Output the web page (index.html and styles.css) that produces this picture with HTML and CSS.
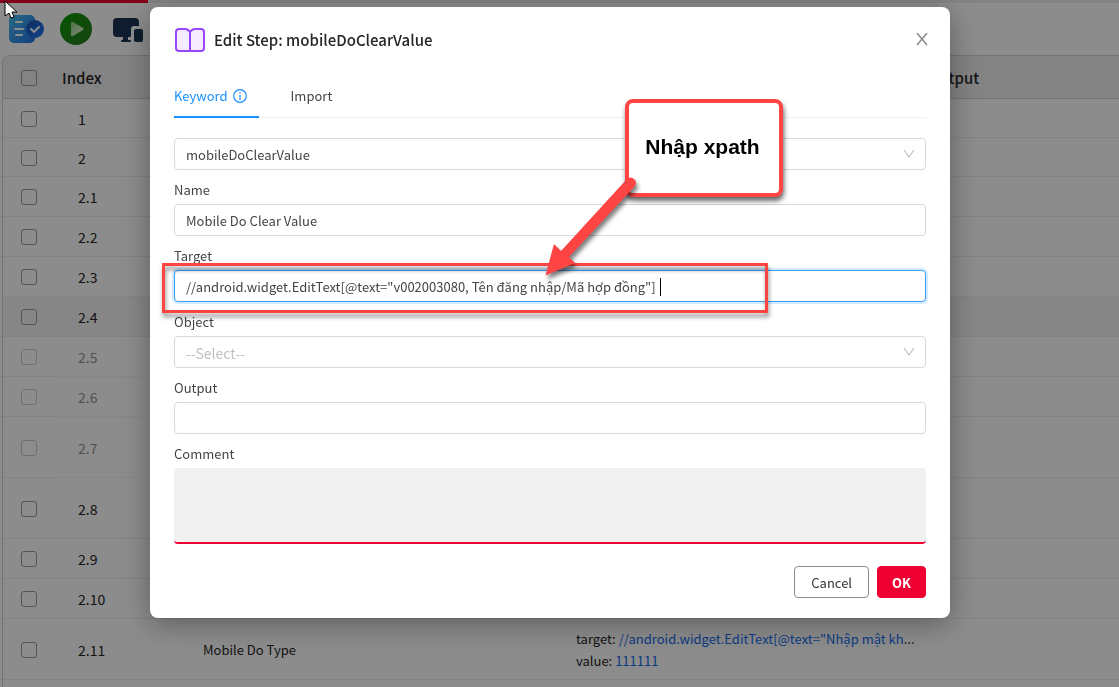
FILE: index.html
```html
<!DOCTYPE html>
<html lang="vi">
<head>
<meta charset="utf-8">
<title>Edit Step</title>
<link rel="stylesheet" href="styles.css">
</head>
<body>
<div class="page">
  <div class="progress"><div class="progress-value"></div></div>
  <nav class="toolbar">
    <button class="tool" aria-label="Steps">
      <svg width="36" height="32" viewBox="0 0 36 32">
        <defs>
          <linearGradient id="sheet" x1="0" y1="0" x2="1" y2="1"><stop offset="0" stop-color="#4bc0f0"/><stop offset="1" stop-color="#2070e8"/></linearGradient>
          <linearGradient id="badge" x1="0" y1="0" x2="1" y2="1"><stop offset="0" stop-color="#1b4fa8"/><stop offset="1" stop-color="#1f7cff"/></linearGradient>
        </defs>
        <rect x="1" y="2" width="26" height="28" rx="5" fill="url(#sheet)"/>
        <path d="M8 9h6M7 16h8M8 22h6" stroke="#fff" stroke-width="2" stroke-linecap="round"/>
        <circle cx="27" cy="16" r="9" fill="url(#badge)"/>
        <path d="m23 16 3 3 5-5" fill="none" stroke="#fff" stroke-width="2" stroke-linecap="round" stroke-linejoin="round"/>
      </svg>
    </button>
    <button class="tool" aria-label="Run">
      <svg width="32" height="32" viewBox="0 0 32 32">
        <defs>
          <linearGradient id="run" x1="0" y1="0" x2="1" y2="1"><stop offset="0" stop-color="#0b9c04"/><stop offset="1" stop-color="#2b7a20"/></linearGradient>
          <linearGradient id="tri" x1="0" y1="0" x2="1" y2="1"><stop offset="0" stop-color="#8fd080"/><stop offset="1" stop-color="#e8f8e0"/></linearGradient>
        </defs>
        <circle cx="16" cy="16" r="16" fill="url(#run)"/>
        <path d="M11 10v12q0 2 2 1l10-6q1-1 0-2L13 9q-2-1-2 1z" fill="url(#tri)"/>
      </svg>
    </button>
    <button class="tool" aria-label="Devices">
      <svg width="40" height="28" viewBox="-4 0 40 28">
        <path d="M5 3h18q4 0 4 4v4h-5q-3 0-3 3v8H5q-4 0-4-4V7q0-4 4-4z" fill="#1a3454"/>
        <path d="M11 21h5v4h2q1 0 1 1t-1 1h-8q-1 0-1-1t1-1h1z" fill="#1a3454"/>
        <rect x="22" y="14" width="9" height="13" rx="2" fill="#1a3454"/>
      </svg>
    </button>
  </nav>
  <table class="steps">
    <colgroup><col class="c-check"><col class="c-index"><col class="c-name"><col class="c-params"><col></colgroup>
    <thead>
      <tr><th><input type="checkbox" aria-label="Select all"></th><th>Index</th><th></th><th></th><th>Output</th></tr>
    </thead>
    <tbody>
      <tr class="short"><td><input type="checkbox" aria-label="Step 1"></td><td>1</td><td></td><td></td><td></td></tr>
      <tr class="short"><td><input type="checkbox" aria-label="Step 2"></td><td>2</td><td></td><td></td><td></td></tr>
      <tr><td><input type="checkbox" aria-label="Step 2.1"></td><td>2.1</td><td></td><td></td><td></td></tr>
      <tr><td><input type="checkbox" aria-label="Step 2.2"></td><td>2.2</td><td></td><td></td><td></td></tr>
      <tr><td><input type="checkbox" aria-label="Step 2.3"></td><td>2.3</td><td></td><td></td><td></td></tr>
      <tr class="current"><td><input type="checkbox" aria-label="Step 2.4"></td><td>2.4</td><td></td><td></td><td></td></tr>
      <tr class="off"><td><input type="checkbox" aria-label="Step 2.5"></td><td>2.5</td><td></td><td></td><td></td></tr>
      <tr class="off"><td><input type="checkbox" aria-label="Step 2.6"></td><td>2.6</td><td></td><td></td><td></td></tr>
      <tr class="off tall"><td><input type="checkbox" aria-label="Step 2.7"></td><td>2.7</td><td></td><td></td><td></td></tr>
      <tr class="tall"><td><input type="checkbox" aria-label="Step 2.8"></td><td>2.8</td><td></td><td></td><td></td></tr>
      <tr><td><input type="checkbox" aria-label="Step 2.9"></td><td>2.9</td><td></td><td></td><td></td></tr>
      <tr><td><input type="checkbox" aria-label="Step 2.10"></td><td>2.10</td><td></td><td></td><td></td></tr>
      <tr class="tall"><td><input type="checkbox" aria-label="Step 2.11"></td><td>2.11</td><td class="text">Mobile Do Type</td>
        <td class="text"><div class="param">target: <span>//android.widget.EditText[@text="Nhập mật kh</span>...</div><div class="param">value: <span>111111</span></div></td><td></td></tr>
      <tr><td></td><td></td><td></td><td></td><td></td></tr>
    </tbody>
  </table>
</div>

<div class="overlay">
  <section class="dialog" role="dialog" aria-labelledby="title">
    <header class="dialog-head">
      <svg width="32" height="28" viewBox="0 0 32 28" fill="#f5edff" stroke="#9747ff" stroke-width="2" stroke-linejoin="round">
        <path d="M16 6q-2-3-5-3H5Q2 3 2 6v16q0 3 3 3h22q3 0 3-3V6q0-3-3-3h-6q-3 0-5 3z"/><path d="M16 6v19"/>
      </svg>
      <h1 id="title">Edit Step: mobileDoClearValue</h1>
      <button class="close" aria-label="Close"><svg width="14" height="14" viewBox="0 0 14 14"><path d="m2 0 10 12M12 0 2 12" stroke="#858585" stroke-width="1.4"/></svg></button>
    </header>
    <div class="tabs" role="tablist">
      <button class="tab active" role="tab" aria-selected="true">Keyword
        <svg width="14" height="14" viewBox="0 0 14 14" fill="none" stroke="#1890ff"><circle cx="7" cy="7" r="6.3" stroke-width="1.2"/><path d="M7 6v5M7 3v1.4" stroke-width="1.2"/></svg>
      </button>
      <button class="tab" role="tab" aria-selected="false">Import</button>
    </div>
    <form class="form">
      <div class="select"><select aria-label="Keyword"><option>mobileDoClearValue</option></select>
        <svg width="12" height="12" viewBox="0 0 12 12"><path d="m1 2 5 7 5-7" fill="none" stroke="#bfbfbf" stroke-width="1.2"/></svg></div>
      <label for="name">Name</label>
      <input class="box" id="name" type="text" value="Mobile Do Clear Value">
      <label for="target">Target</label>
      <input class="box focused" id="target" type="text" value="//android.widget.EditText[@text=&quot;v002003080, Tên đăng nhập/Mã hợp đồng&quot;]">
      <label for="object">Object</label>
      <div class="select empty"><select id="object"><option>--Select--</option></select>
        <svg width="12" height="12" viewBox="0 0 12 12"><path d="m1 2 5 7 5-7" fill="none" stroke="#bfbfbf" stroke-width="1.2"/></svg></div>
      <label for="output">Output</label>
      <input class="box" id="output" type="text">
      <label for="comment">Comment</label>
      <textarea id="comment"></textarea>
      <div class="actions"><button class="btn" type="button">Cancel</button><button class="btn primary" type="button">OK</button></div>
    </form>
    <div class="caret"></div>
    <div class="marker"></div>
    <div class="callout">Nhập xpath</div>
    <svg class="arrow" width="110" height="120" viewBox="0 0 110 120">
      <path d="M5.500 105.500 14 74l7 7L86.500 9.500q4-4 8 0 3 3 0 7L29 87l6 6z" fill="#ff4444"/>
    </svg>
  </section>
</div>
<svg class="pointer" width="14" height="20" viewBox="0 0 14 20"><path d="M1 1v15l4-3 2 5 3-1-2-5h5z" fill="#fff" stroke="#000"/></svg>
</body>
</html>
```

FILE: styles.css
```css
* { box-sizing: border-box; }
body {
  margin: 0;
  height: 100vh;
  overflow: hidden;
  background: #fff;
  color: #262626;
  font: 14px/22px "Noto Sans CJK JP", "Noto Sans", sans-serif;
}
button, input, select, textarea { font: inherit; color: inherit; margin: 0; }
button { background: none; border: 0; padding: 0; display: flex; align-items: center; }

/* Page behind the dialog */
.progress { height: 3px; background: #eee; }
.progress-value { width: 148px; height: 3px; background: #ee0033; }
.toolbar { display: flex; align-items: center; gap: 16px; height: 52px; padding: 0 8px; }
.steps {
  width: calc(100% - 2px);
  margin-left: 2px;
  table-layout: fixed;
  border-collapse: separate;
  border-spacing: 0;
  border: 1px solid #d2d2d2;
  border-width: 1px 0 0 1px;
  border-top-left-radius: 8px;
}
.c-check { width: 52px; }
.c-index { width: 140px; }
.c-name { width: 373px; }
.c-params { width: 353px; }
.steps th {
  height: 43px;
  padding: 1px 7px 0;
  background: #eee;
  border-bottom: 1px solid #d2d2d2;
  text-align: left;
  font-size: 15px;
  font-weight: 500;
}
.steps th:first-child { border-top-left-radius: 8px; }
.steps td { height: 40px; padding: 0 8px; border-bottom: 1px solid #eee; vertical-align: middle; }
.steps td:nth-child(2) { padding-left: 23px; }
.steps th:first-child, .steps td:first-child { padding: 0 0 0 18px; }
.steps .short td { height: 39px; padding-top: 1px; }
.steps .tall td { height: 61px; padding-top: 1px; }
.steps th:first-child { padding-top: 1px; }
.current td { background: #f5f5f5; }
.off td:nth-child(2) { opacity: .5; }
.off input { opacity: .5; }
.steps input {
  appearance: none;
  display: block;
  width: 16px;
  height: 16px;
  border: 1px solid #999;
  border-radius: 3px;
}
.text { font-size: 13px; }
.param { white-space: nowrap; }
.param span { color: #126cf0; }

/* Dialog */
.overlay {
  position: fixed;
  inset: 0;
  display: flex;
  justify-content: center;
  align-items: flex-start;
  padding: 7px 19px 0 0;
  background: rgba(0, 0, 0, .45);
}
.dialog {
  position: relative;
  width: 800px;
  max-width: 100%;
  padding: 16px 24px 20px;
  background: #fff;
  border-radius: 8px;
  box-shadow: 0 6px 30px rgba(0, 0, 0, .35);
  font-size: 13px;
}
.dialog-head { display: flex; align-items: center; gap: 8px; height: 33px; }
.dialog-head h1 { flex: 1; margin: 0; font-size: 15px; font-weight: 500; }
.close { width: 14px; height: 32px; justify-content: center; margin-right: -3px; }
.tabs { display: flex; gap: 32px; margin: 18px 0 20px; border-bottom: 1px solid #f0f0f0; }
.tab { gap: 5px; height: 44px; padding: 2px 12px 0 0; margin-bottom: -1px; border-bottom: 2px solid transparent; color: #444; }
.tab.active { color: #1890ff; border-color: #1890ff; }
.form { display: flex; flex-direction: column; color: #444; }
.form label { line-height: 22px; margin: 9px 0 3px; }
.box, .select select {
  display: block;
  width: 100%;
  height: 32px;
  padding: 1px 11px 0;
  border: 1px solid #d9d9d9;
  border-radius: 4px;
  background: #fff;
  outline: 0;
}
.box.focused { border-color: #40a0f8; box-shadow: 0 0 0 2px rgba(24, 144, 255, .2); }
.select { position: relative; }
.select select { appearance: none; }
.select svg { position: absolute; right: 11px; top: 10px; }
.empty select { color: #bfbfbf; font-size: 14px; }
textarea { height: 76px; border: 0; border-bottom: 2px solid #ee0033; border-radius: 4px; background: #f1f1f1; resize: none; outline: 0; }
.actions { display: flex; justify-content: flex-end; gap: 8px; margin-top: 22px; }
.btn { height: 32px; padding: 1px 16px 0; border: 1px solid #8c8c8c; border-radius: 4px; color: #333; }
.btn.primary { border-color: #ee0033; padding: 1px 14px 0; background: #ee0033; color: #fff; font-weight: 700; }

/* Annotations drawn over the dialog */
.caret { position: absolute; left: 510px; top: 271px; width: 1px; height: 18px; background: #000; }
.marker {
  position: absolute;
  left: 12px;
  top: 256px;
  width: 606px;
  height: 50px;
  border: 3px solid #ff4444;
  filter: drop-shadow(1px 4px 2px rgba(0, 0, 0, .45));
}
.callout {
  position: absolute;
  left: 475px;
  top: 92px;
  width: 158px;
  height: 98px;
  display: flex;
  align-items: center;
  justify-content: center;
  padding: 0 3px 2px 0;
  border: 4px solid #ff4444;
  border-radius: 8px;
  background: #fff;
  color: #000;
  font: bold 21px "Liberation Sans", sans-serif;
  box-shadow: 1px 4px 5px rgba(0, 0, 0, .6);
}
.arrow { position: absolute; left: 390px; top: 163px; filter: drop-shadow(2px 4px 2px rgba(0, 0, 0, .5)); }
.pointer { position: absolute; left: 4px; top: 0; }
```
